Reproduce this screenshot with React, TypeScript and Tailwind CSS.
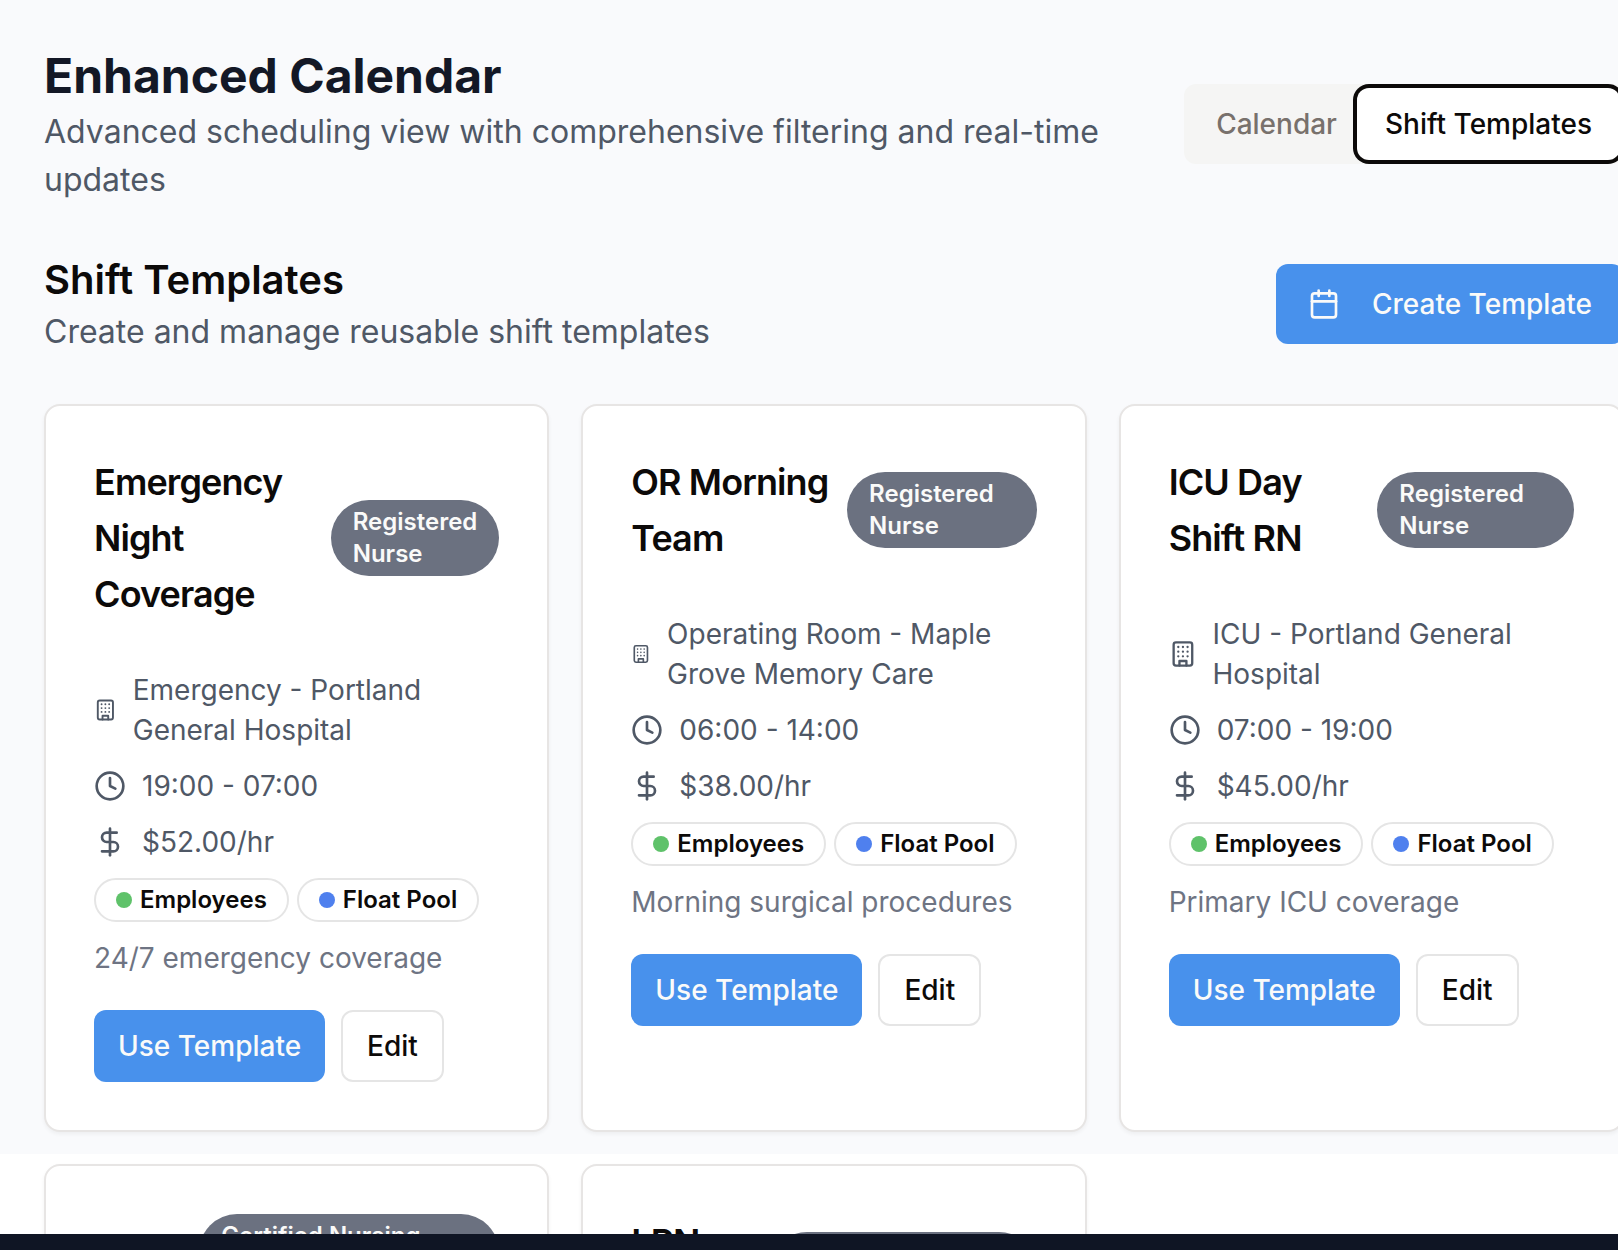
import { Calendar, Clock, DollarSign } from "lucide-react";

type Template = {
  title: string;
  role: string;
  badgeClass?: string;
  place: string;
  hours: string;
  rate: string;
  note: string;
};

const templates: Template[] = [
  {
    title: "Emergency Night Coverage",
    role: "Registered Nurse",
    place: "Emergency - Portland General Hospital",
    hours: "19:00 - 07:00",
    rate: "$52.00/hr",
    note: "24/7 emergency coverage",
  },
  {
    title: "OR Morning Team",
    role: "Registered Nurse",
    place: "Operating Room - Maple Grove Memory Care",
    hours: "06:00 - 14:00",
    rate: "$38.00/hr",
    note: "Morning surgical procedures",
  },
  {
    title: "ICU Day Shift RN",
    role: "Registered Nurse",
    place: "ICU - Portland General Hospital",
    hours: "07:00 - 19:00",
    rate: "$45.00/hr",
    note: "Primary ICU coverage",
  },
  {
    title: "CNA",
    role: "Certified Nursing Assistant",
    badgeClass: "w-[300px] shrink-0",
    place: "Memory Care",
    hours: "07:00 - 15:00",
    rate: "$22.00/hr",
    note: "Day coverage",
  },
  {
    title: "LPN Clinic",
    role: "Licensed Practical Nurse",
    badgeClass: "w-[268px] shrink-0",
    place: "Clinic",
    hours: "09:00 - 17:00",
    rate: "$30.00/hr",
    note: "Clinic coverage",
  },
];

function BuildingIcon() {
  return (
    <svg
      width="32"
      height="32"
      viewBox="0 0 24 24"
      fill="none"
      stroke="currentColor"
      strokeWidth="2"
      strokeLinecap="round"
      strokeLinejoin="round"
      className="mr-4 h-8 w-8"
    >
      <rect width="16" height="20" x="4" y="2" rx="2" ry="2" />
      <path d="M9 22v-4h6v4" />
      <path d="M8 6h.01M16 6h.01M12 6h.01M12 10h.01M12 14h.01M16 10h.01M16 14h.01M8 10h.01M8 14h.01" />
    </svg>
  );
}

function Pill({ dot, label }: { dot: string; label: string }) {
  return (
    <div className="flex items-center rounded-full border-2 border-[#e5e5e5] px-5 py-1 text-[24px] leading-8 font-semibold text-[#0c0a09]">
      <div className={`mr-2 h-4 w-4 rounded-full ${dot}`} />
      {label}
    </div>
  );
}

function TemplateCard({ t }: { t: Template }) {
  return (
    <div className="rounded-[16px] border-2 border-[#e7e5e4] bg-white text-[#0c0a09] shadow-[0_2px_4px_0_rgba(0,0,0,0.05)]">
      <div className="p-12">
        <div className="flex items-center justify-between">
          <h3 className="text-[36px] leading-[56px] font-semibold tracking-[-0.025em]">{t.title}</h3>
          <div
            className={`flex items-center rounded-full border-2 border-transparent bg-[#6b7180] bg-origin-border px-5 py-1 text-[24px] leading-8 font-semibold text-[#fafaf9] ${t.badgeClass ?? ""}`}
          >
            {t.role}
          </div>
        </div>
      </div>
      <div className="flex flex-col gap-4 px-12 pb-12 text-[28px] leading-10">
        <div className="flex items-center text-[#4f5866]">
          <BuildingIcon />
          {t.place}
        </div>
        <div className="flex items-center text-[#4f5866]">
          <Clock className="mr-4 h-8 w-8" />
          {t.hours}
        </div>
        <div className="flex items-center text-[#4f5866]">
          <DollarSign className="mr-4 h-8 w-8" />
          {t.rate}
        </div>
        <div className="flex flex-wrap gap-2">
          <Pill dot="bg-[#5fc26a]" label="Employees" />
          <Pill dot="bg-[#4f80ee]" label="Float Pool" />
        </div>
        <p className="text-[#6e7483]">{t.note}</p>
        <div className="flex gap-4 pt-4 font-medium">
          <button className="h-[72px] rounded-[12px] bg-[#4891ec] px-6 text-[#fafaf9]">Use Template</button>
          <button className="h-[72px] rounded-[12px] border-2 border-[#e5e5e5] bg-white px-6">Edit</button>
        </div>
      </div>
    </div>
  );
}

export default function App() {
  return (
    <div className="flex h-[1250px] w-full flex-col overflow-hidden bg-white font-[Inter,sans-serif] text-[#0c0a09] antialiased [font-optical-sizing:none] [font-variation-settings:'opsz'_14]">
      <div className="h-[1234px] shrink-0 overflow-hidden">
        <main className="h-[1154px] bg-[#f9fafc] pt-11 pl-11">
          <div className="flex w-[1580px] flex-col gap-12">
            <header className="flex items-center justify-between">
              <div className="w-[1090px]">
                <h1 className="text-[48px] leading-[64px] font-bold text-[#131826]">Enhanced Calendar</h1>
                <p className="text-[32px] leading-[48px] text-[#4f5866]">
                  Advanced scheduling view with comprehensive filtering and real-time updates
                </p>
              </div>
              <div className="flex h-20 shrink-0 items-center rounded-[12px] bg-[#f5f5f4] p-2 text-[28px] leading-10 font-medium">
                <button className="px-6 py-3 text-[#78716c]">Calendar</button>
                <button className="rounded-[8px] bg-white px-6 py-3 ring-4 ring-[#0c0a09] ring-offset-4 ring-offset-white">
                  Shift Templates
                </button>
              </div>
            </header>
            <section className="flex items-center justify-between">
              <div>
                <h2 className="text-[40px] leading-[56px] font-semibold">Shift Templates</h2>
                <p className="text-[32px] leading-[48px] text-[#4f5866]">Create and manage reusable shift templates</p>
              </div>
              <button className="flex h-20 items-center gap-4 rounded-[12px] bg-[#4891ec] px-8 text-[28px] leading-10 font-medium text-[#fafaf9]">
                <Calendar className="mr-4 h-8 w-8" />
                Create Template
              </button>
            </section>
            <div className="grid grid-cols-3 gap-8">
              {templates.map((t) => (
                <TemplateCard key={t.title} t={t} />
              ))}
            </div>
          </div>
        </main>
      </div>
      <footer className="h-4 shrink-0 bg-[#0f1524]" />
    </div>
  );
}
